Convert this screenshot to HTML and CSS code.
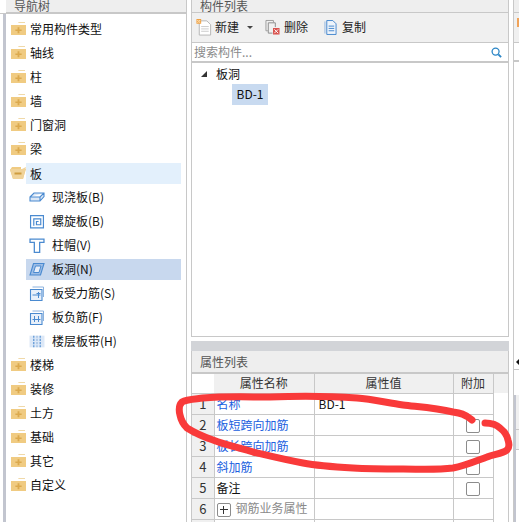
FILE: index.html
```html
<!DOCTYPE html>
<html lang="zh">
<head>
<meta charset="utf-8">
<title>导航树</title>
<link rel="stylesheet" href="styles.css">
</head>
<body>
<svg width="0" height="0" class="defs">
  <symbol id="folder" viewBox="0 0 15 14">
    <path d="M7 1.2 Q7 0 8.5 0 H14 V1 H7z" fill="#f0d9a8"/>
    <path d="M0 3 H15 V13 H0z" fill="#f0cb82"/>
    <path d="M6.6 5.2h1.8v2.2h2.2v1.7H8.4v2.2H6.6V9.1H4.4V7.4h2.2z" fill="#dba94e"/>
  </symbol>
</svg>
<div class="app">
  <div class="edge">
    <div class="edge-top"></div>
    <div class="edge-bar"></div>
  </div>
  <aside class="nav">
    <div class="head"><span>导航树</span></div>
    <ul class="tree">
      <li class="row"><svg class="folder"><use href="#folder"/></svg><span>常用构件类型</span></li>
      <li class="row"><svg class="folder"><use href="#folder"/></svg><span>轴线</span></li>
      <li class="row"><svg class="folder"><use href="#folder"/></svg><span>柱</span></li>
      <li class="row"><svg class="folder"><use href="#folder"/></svg><span>墙</span></li>
      <li class="row"><svg class="folder"><use href="#folder"/></svg><span>门窗洞</span></li>
      <li class="row"><svg class="folder"><use href="#folder"/></svg><span>梁</span></li>
      <li class="row open">
        <svg class="folder" viewBox="0 0 16 14"><path d="M2 1 L11 1 L11 3 L15 3 L16 3 L13 13 H3 L0 4 Z" fill="#f0cb82"/><path d="M0 3 L12 3 L16 1 L13 13 H3z" fill="#f0d39a"/><path d="M4.5 6.5h7v2h-7z" fill="#cf9c3f"/></svg>
        <span class="label-fill">板</span>
      </li>
      <li class="row sub"><svg class="ico" viewBox="0 0 16 14"><path d="M1 6.5 L5 2.5 H15 V6 L11 10.5 H1z M1 6.5 H11 L15 2.5 M11 6.5 V10.5" fill="#dbe7f6" stroke="#4a8ad0" stroke-width="1.1"/></svg><span>现浇板(B)</span></li>
      <li class="row sub"><svg class="ico" viewBox="0 0 14 14"><path d="M1 1.5H13V13H1z M4 11V4.5H10.5V10H6.5V7H8.5" fill="none" stroke="#4a8ad0" stroke-width="1.1"/></svg><span>螺旋板(B)</span></li>
      <li class="row sub"><svg class="ico" viewBox="0 0 14 14"><path d="M0.5 1H13.5V4H9.5V13.5H4.5V4H0.5z" fill="#fff" stroke="#4a8ad0" stroke-width="1.2"/></svg><span>柱帽(V)</span></li>
      <li class="row sub selected"><svg class="ico" viewBox="0 0 16 14"><path d="M4.5 1H15L11.5 12.5H1z" fill="#9dbde6" stroke="#4a8ad0" stroke-width="1.1"/><path d="M6.5 3.5H12L10 10H4.5z" fill="#e6eefa" stroke="#4a8ad0"/></svg><span>板洞(N)</span></li>
      <li class="row sub"><svg class="ico" viewBox="0 0 15 15"><path d="M3 1H14V11" fill="none" stroke="#8cb2de"/><path d="M1 3.5H12.5V14.5H1z" fill="#e8f0fa" stroke="#4a8ad0" stroke-width="1.1"/><path d="M3 9H11M9 6V12M7 7.5H11" fill="none" stroke="#4a8ad0"/></svg><span>板受力筋(S)</span></li>
      <li class="row sub"><svg class="ico" viewBox="0 0 15 15"><path d="M3 1H14V11" fill="none" stroke="#8cb2de"/><path d="M1 3.5H12.5V14.5H1z" fill="#e8f0fa" stroke="#4a8ad0" stroke-width="1.1"/><path d="M3 9.5H11M5 6V12M9 6V12" fill="none" stroke="#4a8ad0"/></svg><span>板负筋(F)</span></li>
      <li class="row sub"><svg class="ico" viewBox="0 0 15 13"><path d="M0.5 1H14.5V12H0.5z" fill="#dce8f7"/><path d="M4.5 1V12M10.5 1V12" fill="none" stroke="#4a8ad0" stroke-dasharray="2 1"/><path d="M7.5 1V12" fill="none" stroke="#8cb2de" stroke-dasharray="2 1"/></svg><span>楼层板带(H)</span></li>
      <li class="row"><svg class="folder"><use href="#folder"/></svg><span>楼梯</span></li>
      <li class="row"><svg class="folder"><use href="#folder"/></svg><span>装修</span></li>
      <li class="row"><svg class="folder"><use href="#folder"/></svg><span>土方</span></li>
      <li class="row"><svg class="folder"><use href="#folder"/></svg><span>基础</span></li>
      <li class="row"><svg class="folder"><use href="#folder"/></svg><span>其它</span></li>
      <li class="row"><svg class="folder"><use href="#folder"/></svg><span>自定义</span></li>
    </ul>
  </aside>
  <main class="main">
    <section class="list">
      <div class="head"><span>构件列表</span></div>
      <div class="toolbar">
        <button class="tool tool-new">
          <svg class="tool-ico" viewBox="0 0 16 18"><path d="M3 2H11L15 6V17H3z" fill="#fff" stroke="#b5b5b5"/><path d="M5 8H13M5 10.5H13M5 13H13" stroke="#c9c9c9"/><path d="M0 0H5V5H0z" fill="#f0a040"/><path d="M1 1H2V2H1zM3 1H4V2H3zM2 2H3V3H2zM1 3H2V4H1zM3 3H4V4H3z" fill="#fff3d8"/></svg>
          <span>新建</span><i class="caret"></i>
        </button>
        <button class="tool tool-del">
          <svg class="tool-ico" viewBox="0 0 16 17"><path d="M1 1H9V3M1 1V12H3" fill="none" stroke="#9a9a9a"/><path d="M3.5 3.5H11V8M3.5 3.5V14.5H8" fill="none" stroke="#8a8a8a"/><path d="M8.5 9H15.5V16H8.5z" fill="#d9534f"/><path d="M10 10.5L14 14.5M14 10.5L10 14.5" stroke="#fff"/></svg>
          <span>删除</span>
        </button>
        <button class="tool tool-copy">
          <svg class="tool-ico" viewBox="0 0 14 17"><path d="M1 2V15" stroke="#8fb4e0" fill="none"/><path d="M3 1H9.5L13 4.5V16H3z" fill="#eef4fb" stroke="#3f83cc"/><path d="M5 7H11M5 9.5H11M5 12H11" stroke="#3f83cc"/></svg>
          <span>复制</span>
        </button>
      </div>
      <div class="search">
        <span class="placeholder">搜索构件...</span>
        <svg class="search-ico" viewBox="0 0 12 12"><circle cx="5" cy="5" r="3.8" fill="none" stroke="#2a85c6" stroke-width="1.4"/><path d="M8 8L11 11" stroke="#2a85c6" stroke-width="2"/></svg>
      </div>
      <div class="items">
        <div class="item-root"><i class="tri"></i><span>板洞</span></div>
        <div class="item-child"><span class="item-sel">BD-1</span></div>
      </div>
    </section>
    <div class="divider"></div>
    <section class="props">
      <div class="head props-head"><span>属性列表</span></div>
      <table class="grid">
        <colgroup><col class="c-n"><col class="c-name"><col class="c-val"><col class="c-add"><col class="c-rest"></colgroup>
        <thead><tr><th class="corner"></th><th>属性名称</th><th>属性值</th><th>附加</th><th class="rest-h"></th></tr></thead>
        <tbody>
          <tr><td class="n">1</td><td class="link">名称</td><td class="val">BD-1</td><td></td><td class="rest"></td></tr>
          <tr><td class="n">2</td><td class="link">板短跨向加筋</td><td></td><td class="ck"><i class="box"></i></td><td class="rest"></td></tr>
          <tr><td class="n">3</td><td class="link">板长跨向加筋</td><td></td><td class="ck"><i class="box"></i></td><td class="rest"></td></tr>
          <tr><td class="n">4</td><td class="link">斜加筋</td><td></td><td class="ck"><i class="box"></i></td><td class="rest"></td></tr>
          <tr><td class="n">5</td><td>备注</td><td></td><td class="ck"><i class="box"></i></td><td class="rest"></td></tr>
          <tr><td class="n">6</td><td class="group"><i class="plus"></i><span>钢筋业务属性</span></td><td></td><td></td><td class="rest"></td></tr>
          <tr><td class="n"></td><td></td><td></td><td></td><td class="rest"></td></tr>
        </tbody>
      </table>
    </section>
  </main>
  <div class="strip">
    <div class="strip-top"><i class="strip-head"></i><div class="strip-tool"><i class="orange"></i></div><div class="strip-blank"></div></div>
    <div class="strip-mid"></div>
    <div class="strip-lower">
      <i class="arrow"></i>
      <div class="strip-gap"></div>
      <div class="strip-body"><div class="strip-cell"></div><div class="strip-cell2"></div></div>
    </div>
  </div>
</div>
<svg class="scribble" viewBox="0 0 519 522" width="519" height="522">
  <path d="M472 420C465 414 460 413 453 412C436 408 420 407 403 405C388 403 372 399 357 398C328 396 299 396 270 397C248 397 225 396 203 398C196 399 187 399 182 402C178 406 179 411 180 415C181 420 183 424 187 428C195 433 204 437 213 440C226 445 240 448 253 452C270 456 286 460 303 463C319 466 336 467 353 468C369 469 386 469 403 469C420 469 436 470 453 468C465 466 476 461 487 457C494 454 502 454 507 450C510 447 509 443 508 440C507 435 504 431 500 428C496 424 491 423 485 423" fill="none" stroke="#f93a3a" stroke-width="7" stroke-linecap="round" stroke-linejoin="round"/>
</svg>
</body>
</html>
```
FILE: styles.css
```css
* { box-sizing: border-box; }
html, body { margin: 0; padding: 0; width: 519px; height: 522px; overflow: hidden; background: #fff; }
body { font: 12px/16px "Noto Sans CJK SC", "Liberation Sans", sans-serif; color: #111; position: relative; }
.defs { position: absolute; }
.app { display: flex; width: 519px; height: 522px; }

.edge { width: 6px; display: flex; flex-direction: column; }
.edge-top { height: 14px; border-bottom: 1px solid #c8c8c8; }
.edge-bar { flex: 1; margin-left: 3px; background: #c2c5cf; }

.head { height: 14px; background: #eeeeee; border-bottom: 2px solid #c8c8c8; color: #555; overflow: hidden; display: flex; align-items: flex-end; padding-left: 8px; }
.head span { display: block; line-height: 16px; margin-bottom: -2px; }

.nav { width: 181px; border-right: 1px solid #c8c8c8; }
.tree { list-style: none; margin: 0; padding: 3px 0 0; }
.row { height: 24px; display: flex; align-items: center; padding-left: 5px; }
.row > span { margin-left: 4px; }
.folder { width: 15px; height: 14px; flex: none; }
.row.open { padding-left: 4px; }
.row.open .folder { width: 16px; }
.row.open .label-fill { margin-left: 0; flex: none; width: 155px; height: 21px; background: #e3f0fc; padding-left: 4px; line-height: 21px; }
.row.sub { margin-left: 20px; margin-right: 5px; padding-left: 3px; }
.row.sub > span { margin-left: 0; }
.ico { width: 16px; height: 15px; flex: none; margin-right: 7px; }
.row.selected { background: linear-gradient(#c8d8ee, #c8d8ee) center / 100% 21px no-repeat; }

.main { width: 318px; margin-left: 4px; display: flex; flex-direction: column; }
.list { height: 337px; flex: none; margin-bottom: 4px; border: 1px solid #c8c8c8; border-top: 0; display: flex; flex-direction: column; }
.list .head { height: 13px; border-bottom: 1px solid #c8c8c8; }
.toolbar { height: 30px; background: #f0f0f0; border-bottom: 1px solid #c8c8c8; display: flex; align-items: center; padding: 0 0 1px 4px; }
.tool { display: flex; align-items: center; gap: 3px; border: 0; background: none; padding: 0; font: inherit; color: #222; }
.tool-ico { width: 16px; height: 17px; flex: none; }
.tool-new { margin-right: 12px; }
.tool-del { margin-right: 16px; gap: 4px; }
.tool-del .tool-ico { width: 15px; }
.tool-copy { gap: 5px; }
.tool-copy .tool-ico { width: 13px; }
.caret { width: 0; height: 0; margin-left: 5px; border: 3px solid transparent; border-top: 3px solid #444; border-bottom: 0; }
.search { height: 20px; border-bottom: 2px solid #c8c8c8; display: flex; align-items: center; justify-content: space-between; padding: 0 6px 0 2px; }
.placeholder { color: #8a8a8a; }
.search-ico { width: 11px; height: 11px; }
.items { flex: 1; background: #fff; }
.item-root { height: 21px; display: flex; align-items: center; padding-left: 9px; }
.tri { width: 0; height: 0; border-style: solid; border-width: 0 0 6px 6px; border-color: transparent transparent #333 transparent; margin-right: 9px; }
.item-child { height: 21px; padding-left: 40px; }
.item-sel { display: block; width: 36px; height: 21px; line-height: 20px; background: #c8daf0; text-align: center; }

.divider { height: 10px; flex: none; background: #d2d4d8; }
.props { flex: 1; min-height: 0; border-left: 1px solid #c8c8c8; border-right: 1px solid #c8c8c8; }
.props-head { height: 23px; border-bottom: 2px solid #c8c8c8; align-items: center; padding: 0 0 0 8px; background: #eeeeee; }
.props-head span { margin: 0; }

.grid { border-collapse: collapse; table-layout: fixed; width: 316px; }
.c-n { width: 22px; } .c-name { width: 100px; } .c-val { width: 139px; } .c-add { width: 40px; } .c-rest { width: 15px; }
.grid th { height: 19px; padding: 0; background: #f0f0f0; font-weight: 400; color: #333; border-right: 1px solid #c8c8c8; }
.grid th.corner { background: #fff; border: 0; }
.grid th.rest-h { border: 0; }
.grid td { height: 21px; padding: 0 0 0 2px; border: 1px solid #c8c8c8; border-left: 0; white-space: nowrap; }
.grid td.val { padding-left: 4px; }
.grid td.n { background: #f0f0f0; text-align: center; padding: 0; color: #333; font-size: 13px; }
.grid td.link { color: #2060e0; }
.grid td.rest { border: 0; }
.grid td.ck { padding: 0; text-align: center; }
.box { display: inline-block; width: 14px; height: 14px; border: 1px solid #8c8c8c; border-radius: 2px; background: #fff; vertical-align: middle; }
.group { color: #8a8a8a; }
.plus { display: inline-block; width: 14px; height: 14px; margin-right: 5px; border: 1px solid #8c8c8c; border-radius: 2px; vertical-align: middle; background: linear-gradient(#333, #333) center / 8px 1px no-repeat, linear-gradient(#333, #333) center / 1px 8px no-repeat; }

.strip { width: 6px; margin-left: 4px; flex: none; display: flex; flex-direction: column; }
.strip-top { height: 64px; border-left: 1px solid #c8c8c8; }
.strip-head { display: block; height: 13px; background: #eeeeee; border-bottom: 1px solid #c8c8c8; }
.strip-tool { height: 30px; background: #f0f0f0; border-bottom: 1px solid #c8c8c8; padding-top: 5px; }
.orange { display: block; width: 3px; height: 9px; margin-left: 3px; background: #f0a35a; }
.strip-blank { height: 19px; border-bottom: 2px solid #c8c8c8; }
.strip-mid { flex: 1; border-left: 1px solid #c8c8c8; }
.strip-lower { height: 182px; position: relative; border-left: 1px solid #c8c8c8; }
.arrow { position: absolute; left: 2px; top: 18px; width: 0; height: 0; border: 4px solid transparent; border-right: 4px solid #111; border-left: 0; }
.strip-gap { height: 30px; border-bottom: 1px solid #c8c8c8; }
.strip-body { margin-top: 25px; height: 127px; border-left: 2px solid #c2c5cf; }
.strip-cell { height: 35px; background: #f0f0f0; border-bottom: 1px solid #c8c8c8; }
.strip-cell2 { height: 20px; background: #f0f0f0; border-bottom: 1px solid #c8c8c8; }

.scribble { position: absolute; left: 0; top: 0; pointer-events: none; }
```
